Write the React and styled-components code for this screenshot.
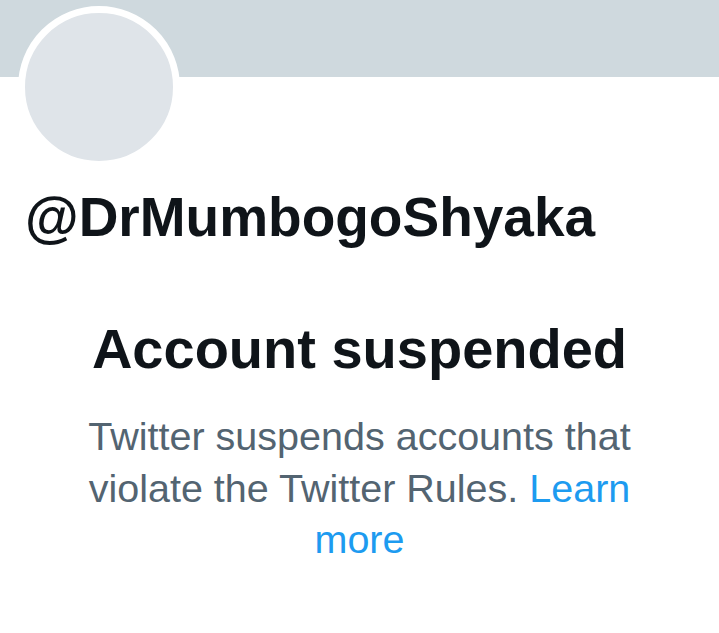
import React from "react";
import styled, { createGlobalStyle } from "styled-components";

const Global = createGlobalStyle`
  html, body {
    margin: 0;
    padding: 0;
    background: #ffffff;
  }
  body {
    font-family: "Liberation Sans", Arial, sans-serif;
    -webkit-font-smoothing: antialiased;
  }
`;

const Page = styled.div`
  width: 719px;
  height: 633px;
  overflow: hidden;
  background: #ffffff;
`;

const Banner = styled.div`
  height: 77px;
  background: #cfd9de;
`;

const Avatar = styled.div`
  width: 148px;
  height: 148px;
  margin: -71px 0 0 18px;
  border: 7px solid #ffffff;
  border-radius: 50%;
  background: #dfe4e9;
  position: relative;
`;

const Handle = styled.h1`
  margin: 17px 0 0 25px;
  font-size: 55px;
  line-height: 64px;
  font-weight: 700;
  color: #0f1419;
`;

const Notice = styled.section`
  display: flex;
  flex-direction: column;
  align-items: center;
  padding: 0 75px;
  margin-top: 68px;
  text-align: center;
`;

const Title = styled.h2`
  margin: 0;
  font-size: 56px;
  line-height: 64px;
  font-weight: 700;
  color: #0f1419;
`;

const Body = styled.p`
  margin: 30px 0 0;
  font-size: 39.5px;
  line-height: 51.5px;
  font-weight: 400;
  color: #536471;
`;

const Link = styled.a`
  color: #1d9bf0;
  text-decoration: none;
`;

export default function App() {
  return (
    <Page>
      <Global />
      <Banner />
      <Avatar />
      <Handle>@DrMumbogoShyaka</Handle>
      <Notice>
        <Title>Account suspended</Title>
        <Body>
          Twitter suspends accounts that violate the Twitter Rules.{" "}
          <Link href="#">Learn more</Link>
        </Body>
      </Notice>
    </Page>
  );
}
